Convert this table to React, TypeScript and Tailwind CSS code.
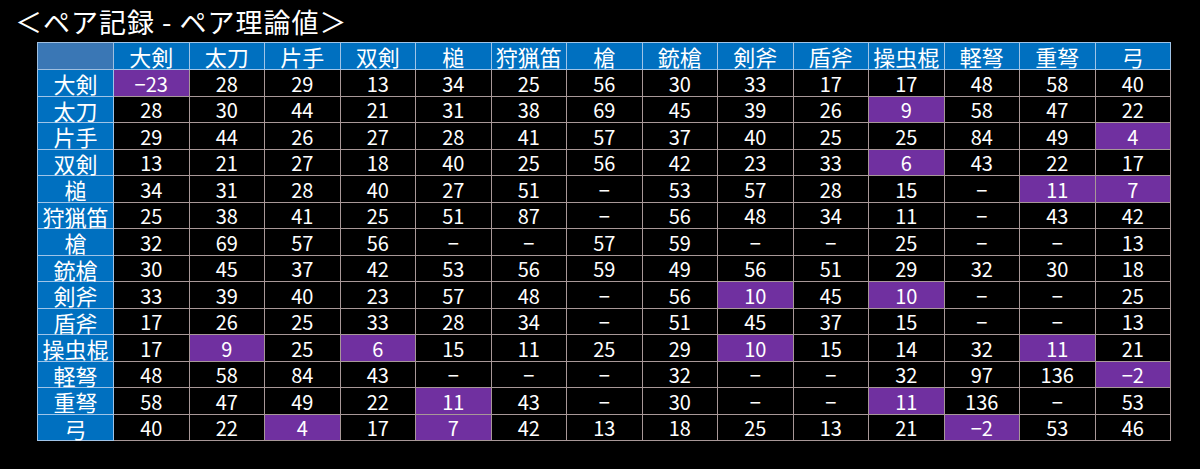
import React from "react";

const cols = ["大剣", "太刀", "片手", "双剣", "槌", "狩猟笛", "槍", "銃槍", "剣斧", "盾斧", "操虫棍", "軽弩", "重弩", "弓"];

const raw: string[] = [
  "-23* 28 29 13 34 25 56 30 33 17 17 48 58 40",
  "28 30 44 21 31 38 69 45 39 26 9* 58 47 22",
  "29 44 26 27 28 41 57 37 40 25 25 84 49 4*",
  "13 21 27 18 40 25 56 42 23 33 6* 43 22 17",
  "34 31 28 40 27 51 - 53 57 28 15 - 11* 7*",
  "25 38 41 25 51 87 - 56 48 34 11 - 43 42",
  "32 69 57 56 - - 57 59 - - 25 - - 13",
  "30 45 37 42 53 56 59 49 56 51 29 32 30 18",
  "33 39 40 23 57 48 - 56 10* 45 10* - - 25",
  "17 26 25 33 28 34 - 51 45 37 15 - - 13",
  "17 9* 25 6* 15 11 25 29 10* 15 14 32 11* 21",
  "48 58 84 43 - - - 32 - - 32 97 136 -2*",
  "58 47 49 22 11* 43 - 30 - - 11* 136 - 53",
  "40 22 4* 17 7* 42 13 18 25 13 21 -2* 53 46",
];

const rows = raw.map((r) =>
  r.split(" ").map((t) => {
    const hl = t.endsWith("*");
    const v = t.replace("*", "").replace(/-/g, "−");
    return { v, hl };
  })
);

export default function App() {
  return (
    <div className="w-[1200px] h-[469px] bg-black text-white font-['Noto_Sans_CJK_JP','Noto_Sans',sans-serif] overflow-hidden">
      <div className="h-[42px] pt-[7px] pl-[15px] text-[27px] leading-[30px] tracking-[1px] whitespace-pre">
        ＜ペア記録 - ペア理論値＞
      </div>
      <div className="pl-[37px]">
        <table className="table-fixed border-collapse w-[1134px]">
          <colgroup>
            <col className="w-[76px]" />
            {cols.map((c) => (
              <col key={c} className="w-[75.5px]" />
            ))}
          </colgroup>
          <thead>
            <tr className="h-[27px]">
              <th className="bg-[#3a77b5] border border-[#9fbfe0] p-0"></th>
              {cols.map((c) => (
                <th
                  key={c}
                  className="bg-[#0070c0] border border-[#9fc4e8] p-0 text-[22px] leading-[22px] font-normal text-center"
                >
                  {c}
                </th>
              ))}
            </tr>
          </thead>
          <tbody>
            {rows.map((r, i) => (
              <tr key={i} className="h-[26.5px]">
                <td className="bg-[#0070c0] border border-[#9fc4e8] p-0 pt-[1px] text-[22px] leading-[22px] text-center">
                  {cols[i]}
                </td>
                {r.map((c, j) => (
                  <td
                    key={j}
                    className={
                      (c.hl ? "bg-[#7030a0] " : "bg-black ") +
                      "border border-[#a89898] p-0 pt-[2px] text-[20px] leading-[22px] text-center"
                    }
                  >
                    {c.v}
                  </td>
                ))}
              </tr>
            ))}
          </tbody>
        </table>
      </div>
    </div>
  );
}
